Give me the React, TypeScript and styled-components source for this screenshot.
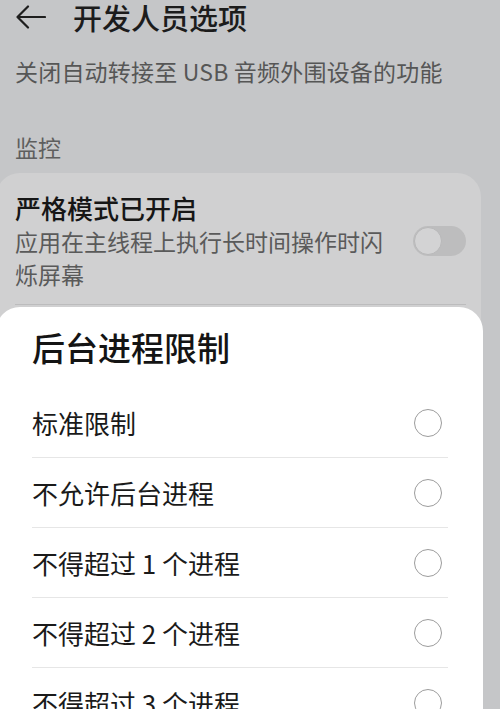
import * as React from 'react'
import styled, { createGlobalStyle } from 'styled-components'

const limits = [
  '标准限制',
  '不允许后台进程',
  '不得超过 1 个进程',
  '不得超过 2 个进程',
  '不得超过 3 个进程',
  '不得超过 4 个进程',
]

const BackArrow = () => (
  <svg width="30" height="24" viewBox="0 0 30 24" fill="none">
    <path d="M12 1.5 L1.5 12 L12 22.5 M1.5 12 H29" stroke="#1e1e1e" strokeWidth="2.2" strokeLinecap="round" strokeLinejoin="round" />
  </svg>
)

export default function App() {
  return (
    <Screen>
      <GlobalStyle />
      <Header>
        <BackArrow />
        <Title>开发人员选项</Title>
      </Header>
      <Note>关闭自动转接至 USB 音频外围设备的功能</Note>
      <SectionLabel>监控</SectionLabel>
      <Card>
        <SettingRow>
          <SettingText>
            <SettingTitle>严格模式已开启</SettingTitle>
            <SettingDesc>应用在主线程上执行长时间操作时闪烁屏幕</SettingDesc>
          </SettingText>
          <Toggle>
            <Knob />
          </Toggle>
        </SettingRow>
        <CardDivider />
      </Card>

      <Sheet>
        <SheetTitle>后台进程限制</SheetTitle>
        <OptionList>
          {limits.map((label) => (
            <Option key={label}>
              <OptionLabel>{label}</OptionLabel>
              <Radio />
            </Option>
          ))}
        </OptionList>
      </Sheet>
    </Screen>
  )
}

const GlobalStyle = createGlobalStyle`
  html, body {
    margin: 0;
    padding: 0;
    background: #c5c6c8;
  }
  body {
    font-family: "Noto Sans CJK SC", "Noto Sans", sans-serif;
  }
`

const Screen = styled.div`
  position: relative;
  width: 500px;
  height: 709px;
  overflow: hidden;
  background: #c5c6c8;
`

const Header = styled.div`
  height: 34px;
  display: flex;
  align-items: center;
  padding-left: 16px;
`

const Title = styled.div`
  margin-left: 27px;
  font-size: 29px;
  font-weight: 500;
  line-height: 34px;
  color: #1c1c1c;
`

const Note = styled.div`
  margin-top: 22px;
  padding-left: 15px;
  font-size: 23px;
  letter-spacing: 0.2px;
  line-height: 30px;
  color: #565656;
`

const SectionLabel = styled.div`
  margin-top: 46px;
  padding-left: 15px;
  font-size: 23px;
  line-height: 30px;
  color: #5e5e5e;
`

const Card = styled.div`
  margin-top: 11px;
  margin-left: -4px;
  width: 485px;
  min-height: 220px;
  box-sizing: border-box;
  padding: 18px 15px 0 19px;
  border-radius: 24px;
  background: #d0d0d1;
`

const SettingRow = styled.div`
  display: flex;
  align-items: center;
`

const SettingText = styled.div`
  flex: 1;
  margin-right: 20px;
`

const SettingTitle = styled.div`
  font-size: 26px;
  font-weight: 500;
  line-height: 34px;
  color: #161616;
`

const SettingDesc = styled.div`
  font-size: 23px;
  line-height: 33px;
  color: #5a5a5a;
`

const Toggle = styled.div`
  width: 53px;
  height: 30px;
  border-radius: 15px;
  background: #bdbdbe;
  display: flex;
  align-items: center;
  padding-left: 1px;
  box-sizing: border-box;
`

const Knob = styled.div`
  width: 28px;
  height: 28px;
  border-radius: 50%;
  background: #d3d3d4;
  box-sizing: border-box;
  border: 1px solid #b8b8b9;
`

const CardDivider = styled.div`
  height: 1px;
  margin-top: 13px;
  background: #bcbcbd;
`

const Sheet = styled.div`
  position: absolute;
  top: 307px;
  left: -4px;
  width: 487px;
  bottom: -40px;
  box-sizing: border-box;
  padding: 18px 35px 0 36px;
  border-radius: 24px 24px 0 0;
  background: #ffffff;
  overflow: hidden;
`

const SheetTitle = styled.div`
  font-size: 33px;
  font-weight: 500;
  line-height: 44px;
  color: #141414;
`

const OptionList = styled.div`
  margin-top: 19px;
`

const Option = styled.div`
  height: 69px;
  display: flex;
  align-items: center;
  justify-content: space-between;
  padding-right: 6px;
  border-bottom: 1px solid #e6e6e6;
`

const OptionLabel = styled.div`
  font-size: 26px;
  line-height: 34px;
  color: #1a1a1a;
`

const Radio = styled.div`
  width: 28px;
  height: 28px;
  border-radius: 50%;
  box-sizing: border-box;
  border: 1.5px solid #9c9c9c;
`
